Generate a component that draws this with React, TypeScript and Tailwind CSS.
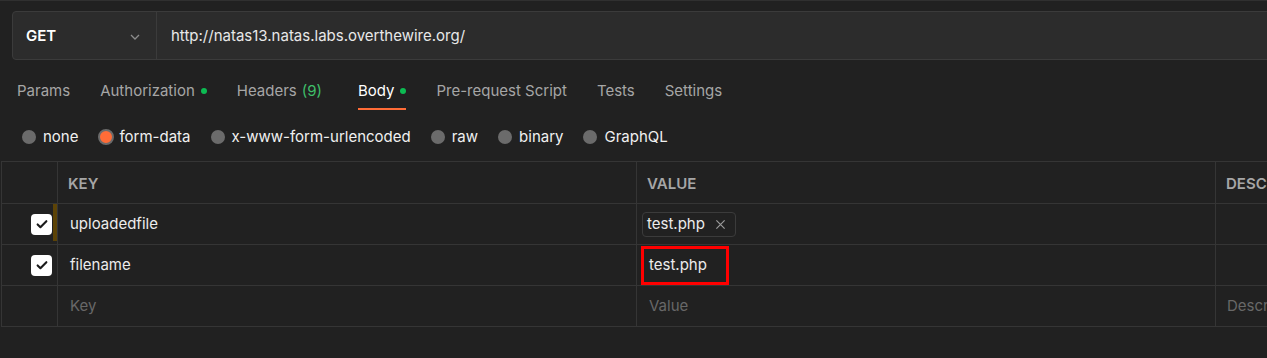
import React from 'react'

const tabs = [
  { label: 'Params' },
  { label: 'Authorization', dot: true },
  { label: 'Headers', count: '(9)' },
  { label: 'Body', dot: true, active: true },
  { label: 'Pre-request Script' },
  { label: 'Tests' },
  { label: 'Settings' },
]

const bodyTypes = ['none', 'form-data', 'x-www-form-urlencoded', 'raw', 'binary', 'GraphQL']

function Check() {
  return (
    <div className="w-[21px] h-[21px] rounded-[4px] bg-white flex items-center justify-center">
      <svg viewBox="0 0 16 16" className="w-[14px] h-[14px]" fill="none" stroke="#1a1a1a" strokeWidth={2.4} strokeLinecap="round" strokeLinejoin="round">
        <path d="M3 8.5l3.2 3.2L13 4.8" />
      </svg>
    </div>
  )
}

export default function App() {
  const cell = 'border-b border-r border-[#353535] h-[41px] flex items-center'
  const head = 'border-b border-r border-[#353535] h-[42px] flex items-center pt-[3px] pl-[10px] text-[15px] font-semibold text-[#a6a6a6] whitespace-nowrap'
  return (
    <div className="w-[1267px] h-[358px] overflow-hidden bg-[#212121] border-t border-[#303030] text-[15px]" style={{ fontFamily: 'Inter, "Noto Sans", sans-serif' }}>
      {/* url bar */}
      <div className="ml-[12px] mt-[10px] w-[1300px] h-[49px] flex rounded-[4px] border border-[#3b3b3b] bg-[#2c2c2c]">
        <div className="w-[144px] shrink-0 flex items-center justify-between pt-[2px] pl-[13px] pr-[15px] border-r border-[#3b3b3b]">
          <span className="text-white font-semibold">GET</span>
          <svg viewBox="0 0 12 12" className="w-[12px] h-[12px]" fill="none" stroke="#8c8c8c" strokeWidth={1.3}>
            <path d="M2 4l4 4 4-4" />
          </svg>
        </div>
        <div className="flex items-center pt-[2px] pl-[14px] text-[#e8e8e8]">http://natas13.natas.labs.overthewire.org/</div>
      </div>

      {/* tabs */}
      <div className="flex pl-[17px] gap-[30px] mt-[12px] h-[38px]">
        {tabs.map((t, i) => (
          <div key={i} className={`flex items-center h-full relative ${t.active ? 'text-white' : 'text-[#a6a6a6]'} ${t.count ? 'mr-[6px]' : ''}`}>
            <span>{t.label}</span>
            {t.count && <span className="ml-[5px] text-[#3fbf6a]">{t.count}</span>}
            {t.dot && <span className="ml-[6px] w-[6px] h-[6px] rounded-full bg-[#0cbb52]" />}
            {t.active && <span className="absolute left-0 right-0 bottom-0 h-[2px] bg-[#ff6c37]" />}
          </div>
        ))}
      </div>

      {/* body types */}
      <div className="flex items-center pt-[3px] pl-[22px] gap-[20px] h-[51px]">
        {bodyTypes.map((b) =>
          b === 'form-data' ? (
            <div key={b} className="flex items-center gap-[5px] text-[#f0f0f0]">
              <span className="w-[16px] h-[16px] rounded-full bg-[#ff6c37] border-[2px] border-[#6b6b6b]" />
              <span>{b}</span>
            </div>
          ) : (
            <div key={b} className="flex items-center gap-[7px] text-[#f0f0f0]">
              <span className="w-[14px] h-[14px] rounded-full bg-[#6b6b6b]" />
              <span>{b}</span>
            </div>
          )
        )}
      </div>

      {/* table */}
      <div className="ml-[1px] grid grid-cols-[56px_579px_579px_1fr] border-t border-l border-[#353535]">
        <div className={head} />
        <div className={head}>KEY</div>
        <div className={head}>VALUE</div>
        <div className={head}>DESCRIPTION</div>

        <div className={`${cell} justify-end pr-[5px] relative`}>
          <Check />
          <span className="absolute right-0 top-0 w-[4px] h-[37px] bg-[#5c4306]" />
        </div>
        <div className={`${cell} pl-[12px] text-[#ececec]`}>uploadedfile</div>
        <div className={`${cell} pl-[5px]`}>
          <div className="h-[25px] flex items-center gap-[10px] pl-[4px] pr-[9px] rounded-[4px] border border-[#3b3b3b] text-[#ececec]">
            <span>test.php</span>
            <svg viewBox="0 0 12 12" className="w-[11px] h-[11px]" fill="none" stroke="#9a9a9a" strokeWidth={1.3}>
              <path d="M1.5 1.5l9 9M10.5 1.5l-9 9" />
            </svg>
          </div>
        </div>
        <div className={cell} />

        <div className={`${cell} justify-end pr-[5px]`}>
          <Check />
        </div>
        <div className={`${cell} pl-[12px] text-[#ececec]`}>filename</div>
        <div className={`${cell} pl-[4px]`}>
          <div className="h-[39px] w-[88px] flex items-center pl-[5px] border-[3px] border-[#ff0000] text-[#ececec]">test.php</div>
        </div>
        <div className={cell} />

        <div className={cell} />
        <div className={`${cell} pl-[12px] text-[#686868]`}>Key</div>
        <div className={`${cell} pl-[12px] text-[#686868]`}>Value</div>
        <div className={`${cell} pl-[11px] text-[#686868] whitespace-nowrap`}>Description</div>
      </div>
    </div>
  )
}
